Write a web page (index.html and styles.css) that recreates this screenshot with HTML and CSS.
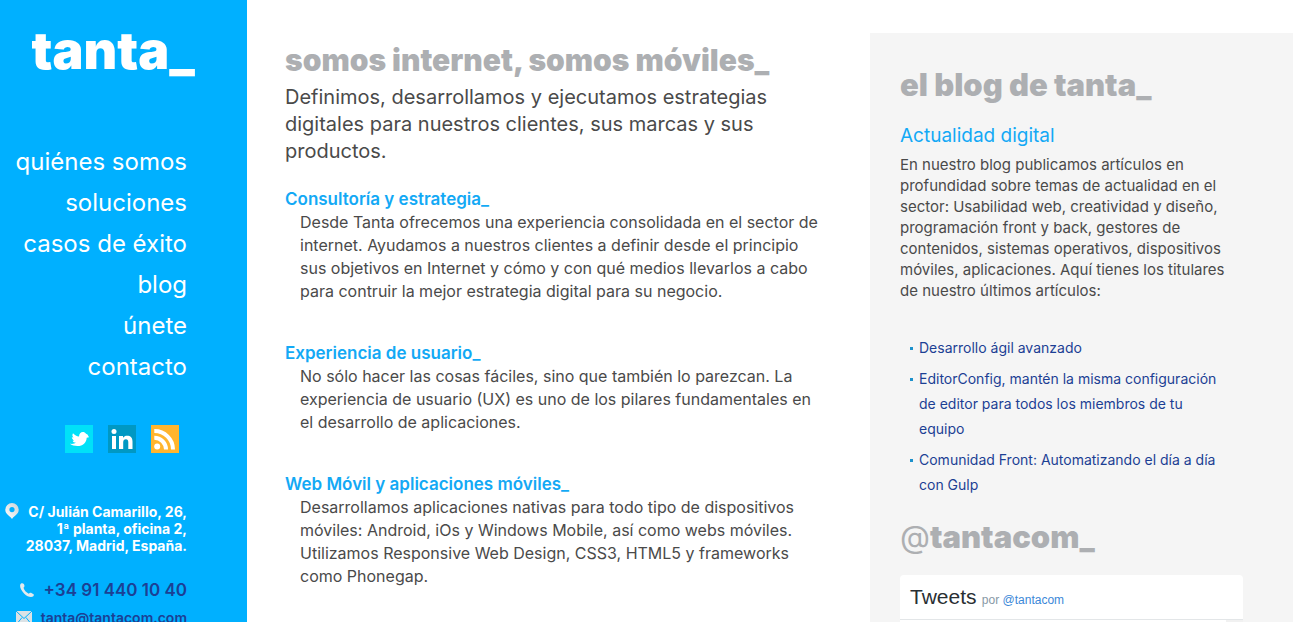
FILE: index.html
```html
<!DOCTYPE html>
<html lang="es">
<head>
<meta charset="utf-8">
<meta name="viewport" content="width=device-width, initial-scale=1">
<title>tanta_</title>
<link rel="stylesheet" href="styles.css">
</head>
<body>
<div class="page">
  <header class="sidebar">
    <a class="logo" href="#">tanta_</a>
    <nav class="menu">
      <a href="#">quiénes somos</a>
      <a href="#">soluciones</a>
      <a href="#">casos de éxito</a>
      <a href="#">blog</a>
      <a href="#">únete</a>
      <a href="#">contacto</a>
    </nav>
    <div class="social">
      <a href="#" aria-label="Twitter"><svg viewBox="0 0 28 28"><path fill="#00e1f8" d="M0 0h28v28H0z"/><path fill="#fff" d="M8 8.200c1.800 2 3.700 3 6 3.300C14.200 8.600 15.700 7 17.800 7c1.400 0 2.500.6 3.200 1.700l1.500.8 1.500 2.800-2.300.4C21.500 17.500 18 21 12.500 21c-3 0-5.800-.7-7.500-2.200 2.500.4 4.500 0 6-1-1.900-.2-3-1-3.400-2.100l1.700-.2c-1.500-.8-2.400-2-2.500-3.300l1.700.3C7.200 11.300 7.100 9.700 8 8.200z"/></svg></a>
      <a href="#" aria-label="LinkedIn"><svg viewBox="0 0 28 28"><path fill="#0098c3" d="M0 0h28v28H0z"/><circle cx="6" cy="6.500" r="2.500" fill="#fff"/><path fill="#fff" d="M4 11h4v13H4zM11 11h4v1.800c1-1.500 2.300-2.100 4.100-2.100 3.500 0 5.400 2 5.400 5.800V24h-4.200v-6.800c0-2-.8-3-2.300-3-1.800 0-2.800 1.200-2.800 3.200V24H11z"/></svg></a>
      <a href="#" aria-label="RSS"><svg viewBox="0 0 28 28"><path fill="#ffb52e" d="M0 0h28v28H0z"/><circle cx="6.200" cy="21.500" r="3" fill="#fff"/><path fill="none" stroke="#fff" stroke-width="4" d="M3.300 12.800A11.700 11.700 0 0 1 15 24.500M3.300 6A18.500 18.500 0 0 1 22 24.500"/></svg></a>
    </div>
    <div class="address">
      <svg viewBox="0 0 14 17"><defs><linearGradient id="pin" x1="1" y1="0" x2="0" y2="1"><stop offset="0" stop-color="#cbd3d8"/><stop offset="1" stop-color="#fff"/></linearGradient></defs><path fill="url(#pin)" fill-rule="evenodd" d="M7 0a6.700 6.700 0 0 0-6.700 6.700C.3 11 4 11.800 7 16c3-4.200 6.700-5 6.700-9.300A6.700 6.700 0 0 0 7 0zm0 4a2.600 2.600 0 1 1 0 5.200A2.600 2.600 0 0 1 7 4z"/></svg>
      <address>C/ Julián Camarillo, 26,<br>1ª planta, oficina 2,<br>28037, Madrid, España.</address>
    </div>
    <a class="phone" href="tel:+34914401040"><svg viewBox="0 0 14 14"><path fill="#e3eaee" d="M1 .6C2.500-.4 3.800.3 4.300 2c.3 1.300.2 2-.8 2.800.6 2.300 2.700 4.800 5.300 5.900 1-1 1.700-1 3-.5 1.900.7 2.700 1.800 1.500 3-2 1.600-5.900.5-9-2.500C1 7.500-1.300 2.300 1 .6z"/></svg>+34 91 440 10 40</a>
    <a class="mail" href="mailto:tanta@tantacom.com"><svg viewBox="0 0 16 14"><path fill="#dce2e5" d="M0 0h16v14H0z"/><path fill="none" stroke="#00b0ff" d="M0 0l8 7.500L16 0M0 14l6-7.500M16 14l-6-7.500"/></svg>tanta@tantacom.com</a>
  </header>

  <main class="content">
    <h1>somos internet, somos móviles_</h1>
    <p class="intro">Definimos, desarrollamos y ejecutamos estrategias digitales para nuestros clientes, sus marcas y sus productos.</p>
    <section>
      <h2><a href="#">Consultoría y estrategia_</a></h2>
      <p>Desde Tanta ofrecemos una experiencia consolidada en el sector de internet. Ayudamos a nuestros clientes a definir desde el principio sus objetivos en Internet y cómo y con qué medios llevarlos a cabo para contruir la mejor estrategia digital para su negocio.</p>
    </section>
    <section>
      <h2><a href="#">Experiencia de usuario_</a></h2>
      <p>No sólo hacer las cosas fáciles, sino que también lo parezcan. La experiencia de usuario (UX) es uno de los pilares fundamentales en el desarrollo de aplicaciones.</p>
    </section>
    <section>
      <h2><a href="#">Web Móvil y aplicaciones móviles_</a></h2>
      <p>Desarrollamos aplicaciones nativas para todo tipo de dispositivos móviles: Android, iOs y Windows Mobile, así como webs móviles. Utilizamos Responsive Web Design, CSS3, HTML5 y frameworks como Phonegap.</p>
    </section>
  </main>

  <aside class="blog">
    <h2>el blog de tanta_</h2>
    <h3>Actualidad digital</h3>
    <p>En nuestro blog publicamos artículos en profundidad sobre temas de actualidad en el sector: Usabilidad web, creatividad y diseño, programación front y back, gestores de contenidos, sistemas operativos, dispositivos móviles, aplicaciones. Aquí tienes los titulares de nuestro últimos artículos:</p>
    <ul>
      <li><a href="#">Desarrollo ágil avanzado</a></li>
      <li><a href="#">EditorConfig, mantén la misma configuración de editor para todos los miembros de tu equipo</a></li>
      <li><a href="#">Comunidad Front: Automatizando el día a día con Gulp</a></li>
    </ul>
    <h2><span class="at">@</span>tantacom_</h2>
    <div class="tweets">
      <div class="tweets-head"><span class="tweets-title">Tweets</span> por <a href="#">@tantacom</a></div>
      <div class="tweets-body"></div>
    </div>
  </aside>
</div>
</body>
</html>
```
FILE: styles.css
```css
* { box-sizing: border-box; }
body {
  margin: 0;
  height: 100vh;
  overflow: hidden;
  background: #fff;
  color: #4a4a4a;
  font: 16px/23px Inter, "Liberation Sans", sans-serif;
}
a { color: inherit; text-decoration: none; }
h1, h2, h3, p, ul { margin: 0; padding: 0; font-weight: 400; }
svg { display: block; flex: none; }
.page { display: flex; min-height: 100vh; padding-right: 10px; }

.sidebar {
  flex: none;
  width: 247px;
  padding: 23px 60px 0 0;
  background: #00b0ff;
  color: #fff;
  display: flex;
  flex-direction: column;
  align-items: flex-end;
}
.logo { font-size: 52px; line-height: 56px; font-weight: 900; margin-right: -8px; }
.menu { display: flex; flex-direction: column; align-items: flex-end; margin-top: 62px; }
.menu a { font-size: 24px; line-height: 41px; white-space: nowrap; }
.social { display: flex; gap: 15px; margin: 38px 8px 0 0; }
.social svg { width: 28px; height: 28px; }
.address { display: flex; align-self: stretch; justify-content: space-between; margin-top: 50px; padding-left: 5px; }
.address svg { width: 14px; height: 17px; }
address { font-size: 14px; line-height: 17px; font-style: normal; font-weight: 700; text-align: right; white-space: nowrap; }
.phone, .mail { display: flex; align-items: center; gap: 10px; color: #1c3f94; font-weight: 600; white-space: nowrap; }
.phone { font-size: 17px; line-height: 24px; margin-top: 24px; }
.phone svg { width: 14px; height: 14px; }
.mail { gap: 9px; font-size: 14px; line-height: 20px; margin-top: 6px; }
.mail svg { width: 16px; height: 14px; }

.content { flex: 1; padding: 42px 44px 0 38px; }
.content h1, .blog h2 { color: #adafb2; font-size: 30px; line-height: 36px; font-weight: 900; white-space: nowrap; }
.intro { padding: 6px 40px 0 0; font-size: 20px; line-height: 27px; }
.content section { margin-bottom: 38px; }
.intro + section { margin-top: 22px; }
.content h2 { color: #13a9f5; font-size: 17px; line-height: 24px; font-weight: 600; }
.content section p { padding-left: 15px; }

.blog { flex: none; width: 423px; margin-top: 33px; padding: 34px 50px 0 30px; background: #f5f5f5; }
.blog h2 { font-size: 31px; }
.blog h3 { margin-top: 20px; color: #13a9f5; font-size: 19px; line-height: 26px; }
.blog p { margin-top: 5px; font-size: 15px; line-height: 21px; }
.blog ul { margin: 34px 0 22px; padding: 0 20px 0 10px; list-style: none; }
.blog li { display: flex; gap: 6px; margin-bottom: 6px; color: #1c3f94; font-size: 14px; line-height: 25px; }
.blog li::before { content: ""; flex: none; width: 3px; height: 3px; margin-top: 12px; background: #1c91cc; }
.blog h2 .at { font-weight: 400; }
.tweets { margin-top: 20px; background: #fff; border-radius: 4px; }
.tweets-head { padding: 10px 10px 7px; border-bottom: 1px solid #e3e6e8; color: #8899a6; font: 12px/24px "Liberation Sans", Arial, sans-serif; }
.tweets-head a { color: #3b88d8; }
.tweets-title { margin-right: 2px; color: #292f33; font-size: 21px; }
.tweets-body { height: 400px; border-right: 17px solid #f1f1f1; }
```
